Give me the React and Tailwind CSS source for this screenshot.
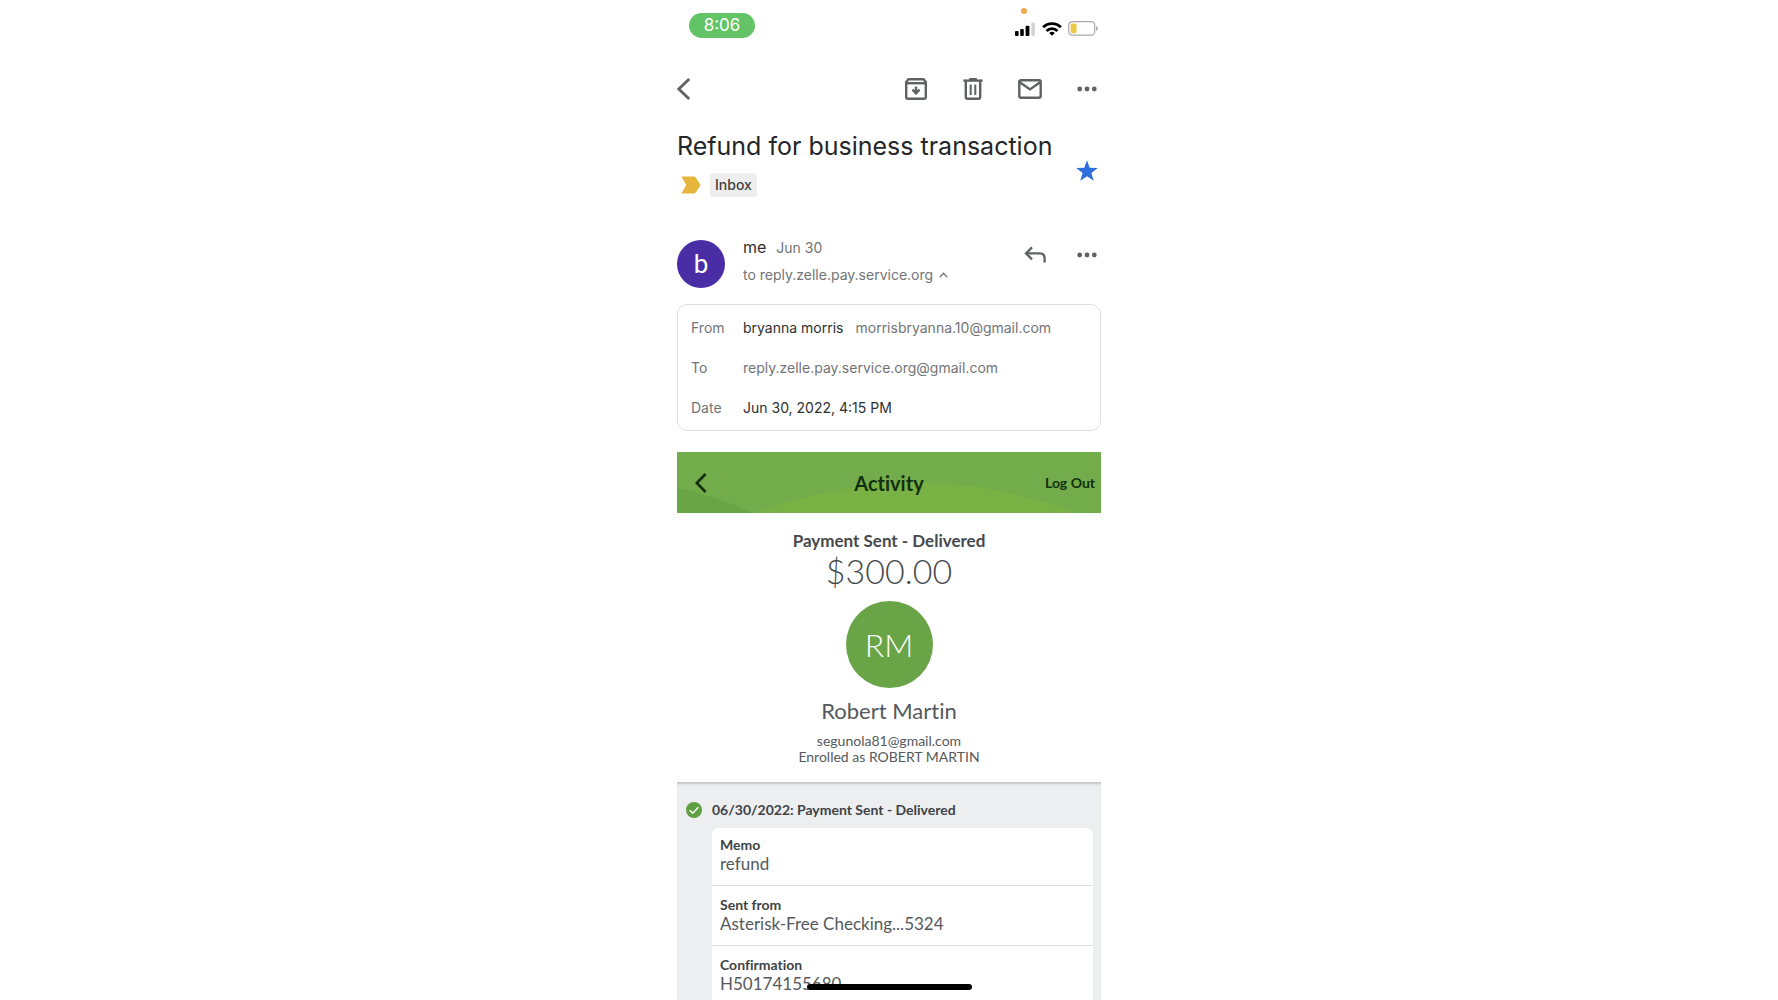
import React from "react";

const sans = "font-['Inter','Liberation_Sans',sans-serif]";
const round = "font-['Lato','Open_Sans',sans-serif] [font-variant-ligatures:none]";

function StatusBar() {
  return (
    <div className="flex items-start justify-between pt-[13px] pl-3 pr-[3px] h-[60px]">
      <time className="flex h-[25px] w-[66px] items-center justify-center rounded-full bg-[#62c466] text-[17px] text-white">
        8:06
      </time>
      <div className="relative mt-2 flex items-center gap-[6px]">
        <span className="absolute -top-[13px] left-[7px] size-[6px] rounded-full bg-[#eda850]" />
        <svg width="22" height="14" viewBox="0 0 22 14" aria-label="Signal">
          <rect x="1" y="9" width="3.6" height="5" rx="1" />
          <rect x="6.2" y="7" width="3.6" height="7" rx="1" />
          <rect x="11.6" y="3.8" width="3.8" height="10.2" rx="1" />
          <rect x="17.4" y="0.6" width="3.4" height="13.4" rx="1" fill="#d2d2d2" />
        </svg>
        <svg width="20" height="14" viewBox="0 0 20 14" fill="none" stroke="#000" strokeWidth="2.9" aria-label="Wi-Fi">
          <path d="M1.2 5.3 A12.4 12.4 0 0 1 18.8 5.3" />
          <path d="M4.6 8.9 A7.6 7.6 0 0 1 15.4 8.9" />
          <path d="M10 13.8 L7.2 11 A4 4 0 0 1 12.8 11 Z" fill="#000" stroke="none" />
        </svg>
        <svg width="30" height="15" viewBox="0 0 30 15" aria-label="Battery">
          <rect x="0.7" y="0.7" width="26" height="13.4" rx="3.6" fill="none" stroke="#a9a9a9" strokeWidth="1.2" />
          <rect x="2.6" y="2.6" width="6" height="9.6" rx="1.6" fill="#ecc94b" />
          <path d="M28 5 Q29.8 5.6 29.8 7.4 Q29.8 9.2 28 9.8Z" fill="#a9a9a9" />
        </svg>
      </div>
    </div>
  );
}

function Dots() {
  return (
    <svg width="20" height="6" viewBox="0 0 20 6" fill="#5f6163">
      <circle cx="2.7" cy="3" r="2.4" />
      <circle cx="10" cy="3" r="2.4" />
      <circle cx="17.3" cy="3" r="2.4" />
    </svg>
  );
}

function Toolbar() {
  return (
    <nav className="flex h-[58px] items-center justify-between">
      <button aria-label="Back">
        <svg width="14" height="22" viewBox="0 0 14 22" fill="none" stroke="#5f6163" strokeWidth="2.8">
          <path d="M12.2 1 L1.8 11 L12.2 21" />
        </svg>
      </button>
      <div className="flex items-center gap-[33px] pr-[2px]">
        <button aria-label="Archive" className="flex w-6 justify-center">
          <svg width="22" height="22" viewBox="0 0 22 22" fill="none" stroke="#5f6163" strokeWidth="2.4">
            <path d="M3.4 1.2 H18.6 L20.8 4 V19 Q20.8 20.8 19 20.8 H3 Q1.2 20.8 1.2 19 V4 Z" strokeLinejoin="round" />
            <path d="M1.5 5.2 H20.5" />
            <path d="M11 8.6 V14.6 M7.4 11.6 L11 15.2 L14.6 11.6" />
          </svg>
        </button>
        <button aria-label="Delete" className="flex w-6 justify-center">
          <svg width="20" height="22" viewBox="0 0 20 22" fill="none" stroke="#5f6163" strokeWidth="2.4">
            <path d="M0.4 2.6 H19.6" />
            <path d="M6.2 1.2 H13.8" />
            <path d="M2.8 2.6 V19 Q2.8 20.8 4.6 20.8 H15.4 Q17.2 20.8 17.2 19 V2.6" />
            <path d="M7.7 6.6 V17 M12.3 6.6 V17" strokeWidth="2" />
          </svg>
        </button>
        <button aria-label="Mark unread" className="flex w-6 justify-center">
          <svg width="24" height="20" viewBox="0 0 24 20" fill="none" stroke="#5f6163" strokeWidth="2.4">
            <rect x="1.3" y="1.3" width="21.4" height="17.4" rx="1.6" />
            <path d="M1.8 3.2 L12 10.4 L22.2 3.2" />
          </svg>
        </button>
        <button aria-label="More" className="flex w-6 justify-center"><Dots /></button>
      </div>
    </nav>
  );
}

function Subject() {
  return (
    <div className="flex items-center justify-between pr-[3px]">
      <div>
        <h1 className="mt-[10px] text-[25px] leading-9 text-[#242628]">Refund for business transaction</h1>
        <div className="mt-[9px] flex items-center gap-[9px] pl-1">
          <svg width="20" height="18" viewBox="0 0 20 18" fill="#e6b63c" aria-label="Important">
            <path d="M0.4 0.4 H12.6 Q14 0.4 14.8 1.5 L19.6 9 L14.8 16.5 Q14 17.6 12.6 17.6 H0.4 L5.2 9 Z" />
          </svg>
          <span className="rounded-[3px] bg-[#eeeeee] px-[5px] text-sm leading-6 font-medium text-[#3c3e40]">Inbox</span>
        </div>
      </div>
      <button aria-label="Starred" className="mt-[26px]">
        <svg width="22" height="22" viewBox="0 0 22 22" fill="#2f6fdc">
          <path d="M11 0.2 L13.7 7.7 L21.8 8 L15.4 12.9 L17.7 20.8 L11 16.2 L4.3 20.8 L6.6 12.9 L0.2 8 L8.3 7.7 Z" />
        </svg>
      </button>
    </div>
  );
}

function Sender() {
  return (
    <div className="mt-[42px] flex items-center">
      <div className="flex size-12 shrink-0 items-center justify-center rounded-full bg-[#482da4] font-['Roboto',sans-serif] text-[26px] text-white">
        b
      </div>
      <div className="ml-[18px] grow pb-[6px]">
        <p className="flex items-baseline gap-[10px] leading-4">
          <span className="text-base leading-4 text-[#2e3032]">me</span>
          <span className="text-sm leading-4 text-[#727476]">Jun 30</span>
        </p>
        <button className="mt-[11px] flex items-center gap-[6px] text-sm leading-4 text-[#727476]">
          to reply.zelle.pay.service.org
          <svg width="9" height="6" viewBox="0 0 9 6" fill="none" stroke="#727476" strokeWidth="1.3">
            <path d="M0.8 5.2 L4.5 1.2 L8.2 5.2" />
          </svg>
        </button>
      </div>
      <div className="flex items-center gap-[28px] pr-[2px] pb-[18px]">
        <button aria-label="Reply" className="flex w-6 justify-center">
          <svg width="22" height="18" viewBox="0 0 22 18" fill="none" stroke="#5f6163" strokeWidth="2.3">
            <path d="M8 1.4 L2 7.4 L8 13.4" />
            <path d="M2 7.4 H15.6 Q20.6 7.4 20.6 12.4 V16.6" />
          </svg>
        </button>
        <button aria-label="Message options" className="flex w-6 justify-center"><Dots /></button>
      </div>
    </div>
  );
}

function Details() {
  return (
    <dl className="mt-[15px] grid grid-cols-[52px_1fr] gap-y-4 rounded-[10px] border border-[#dfdfdf] px-[13px] pt-[11px] pb-[10px] text-sm leading-6 text-[#727476]">
      <dt>From</dt>
      <dd className="flex gap-3">
        <span className="text-[#2e3032]">bryanna morris</span>
        <span>morrisbryanna.10@gmail.com</span>
      </dd>
      <dt>To</dt>
      <dd>reply.zelle.pay.service.org@gmail.com</dd>
      <dt>Date</dt>
      <dd className="text-[#2e3032]">Jun 30, 2022, 4:15 PM</dd>
    </dl>
  );
}

function ActivityHeader() {
  return (
    <header className="relative mt-[21px] grid h-[61px] grid-cols-3 items-center overflow-hidden bg-[#73ac4a] px-[6px] text-[#12300f]">
      <svg className="absolute inset-0 size-full" viewBox="0 0 424 61" preserveAspectRatio="none">
        <path d="M80 61 Q240 0 400 61Z" fill="#79b145" />
        <path d="M0 36 Q40 44 76 61 H0Z" fill="#69a546" />
      </svg>
      <button aria-label="Back to activity" className="relative ml-3 w-fit">
        <svg width="12" height="20" viewBox="0 0 12 20" fill="none" stroke="currentColor" strokeWidth="2.6">
          <path d="M10.6 1 L1.8 10 L10.6 19" />
        </svg>
      </button>
      <h2 className="relative text-center text-xl font-bold">Activity</h2>
      <button className="relative justify-self-end text-sm font-bold">Log Out</button>
    </header>
  );
}

function Payment() {
  return (
    <section className="flex flex-col items-center pt-[18px] pb-[17px] text-[#46494c]">
      <h3 className="text-[17px] leading-5 font-bold">Payment Sent - Delivered</h3>
      <p className="text-[34px] leading-10 font-light">$300.00</p>
      <div className="mt-[10px] flex size-[87px] items-center justify-center rounded-full bg-[#69a547] text-[32px] font-light text-white">
        RM
      </div>
      <p className="mt-2 text-[22px] leading-[30px] text-[#55595c]">Robert Martin</p>
      <p className="mt-[7px] text-center text-sm leading-4 text-[#55595c]">
        segunola81@gmail.com
        <br />
        Enrolled as ROBERT MARTIN
      </p>
    </section>
  );
}

const rows = [
  ["Memo", "refund"],
  ["Sent from", "Asterisk-Free Checking...5324"],
  ["Confirmation", "H50174155680"],
];

function Timeline() {
  return (
    <section className="bg-[#eceef0] pr-2 pl-[9px] text-[#3f4346] shadow-[inset_0_3px_2px_-1px_#c3c7ca]">
      <h4 className="flex items-center gap-[10px] pt-[18px] text-sm leading-5 font-bold">
        <svg width="16" height="16" viewBox="0 0 16 16" fill="none">
          <circle cx="8" cy="8" r="8" fill="#5fa044" />
          <path d="M3.6 8.2 L6.8 11.2 L12.4 5.2" stroke="#fff" strokeWidth="1.5" />
        </svg>
        06/30/2022: Payment Sent - Delivered
      </h4>
      <dl className="mt-2 ml-[26px] divide-y divide-[#dddfe0] rounded-t-md bg-white">
        {rows.map(([label, value]) => (
          <div key={label} className="h-[60px] px-2 pt-[10px] first:h-[58px] first:pt-2">
            <dt className="text-sm leading-[18px] font-bold">{label}</dt>
            <dd className="text-[17px] leading-5 text-[#55595c]">{value}</dd>
          </div>
        ))}
      </dl>
    </section>
  );
}

export default function App() {
  return (
    <main className={`relative h-screen overflow-hidden bg-white ${sans}`}>
      <div className="mx-auto max-w-[424px]">
        <StatusBar />
        <Toolbar />
        <Subject />
        <Sender />
        <Details />
        <article className={round}>
          <ActivityHeader />
          <Payment />
          <Timeline />
        </article>
      </div>
      <div className="absolute inset-x-0 bottom-[10px] mx-auto h-[6px] w-[165px] rounded-full bg-black" />
    </main>
  );
}
